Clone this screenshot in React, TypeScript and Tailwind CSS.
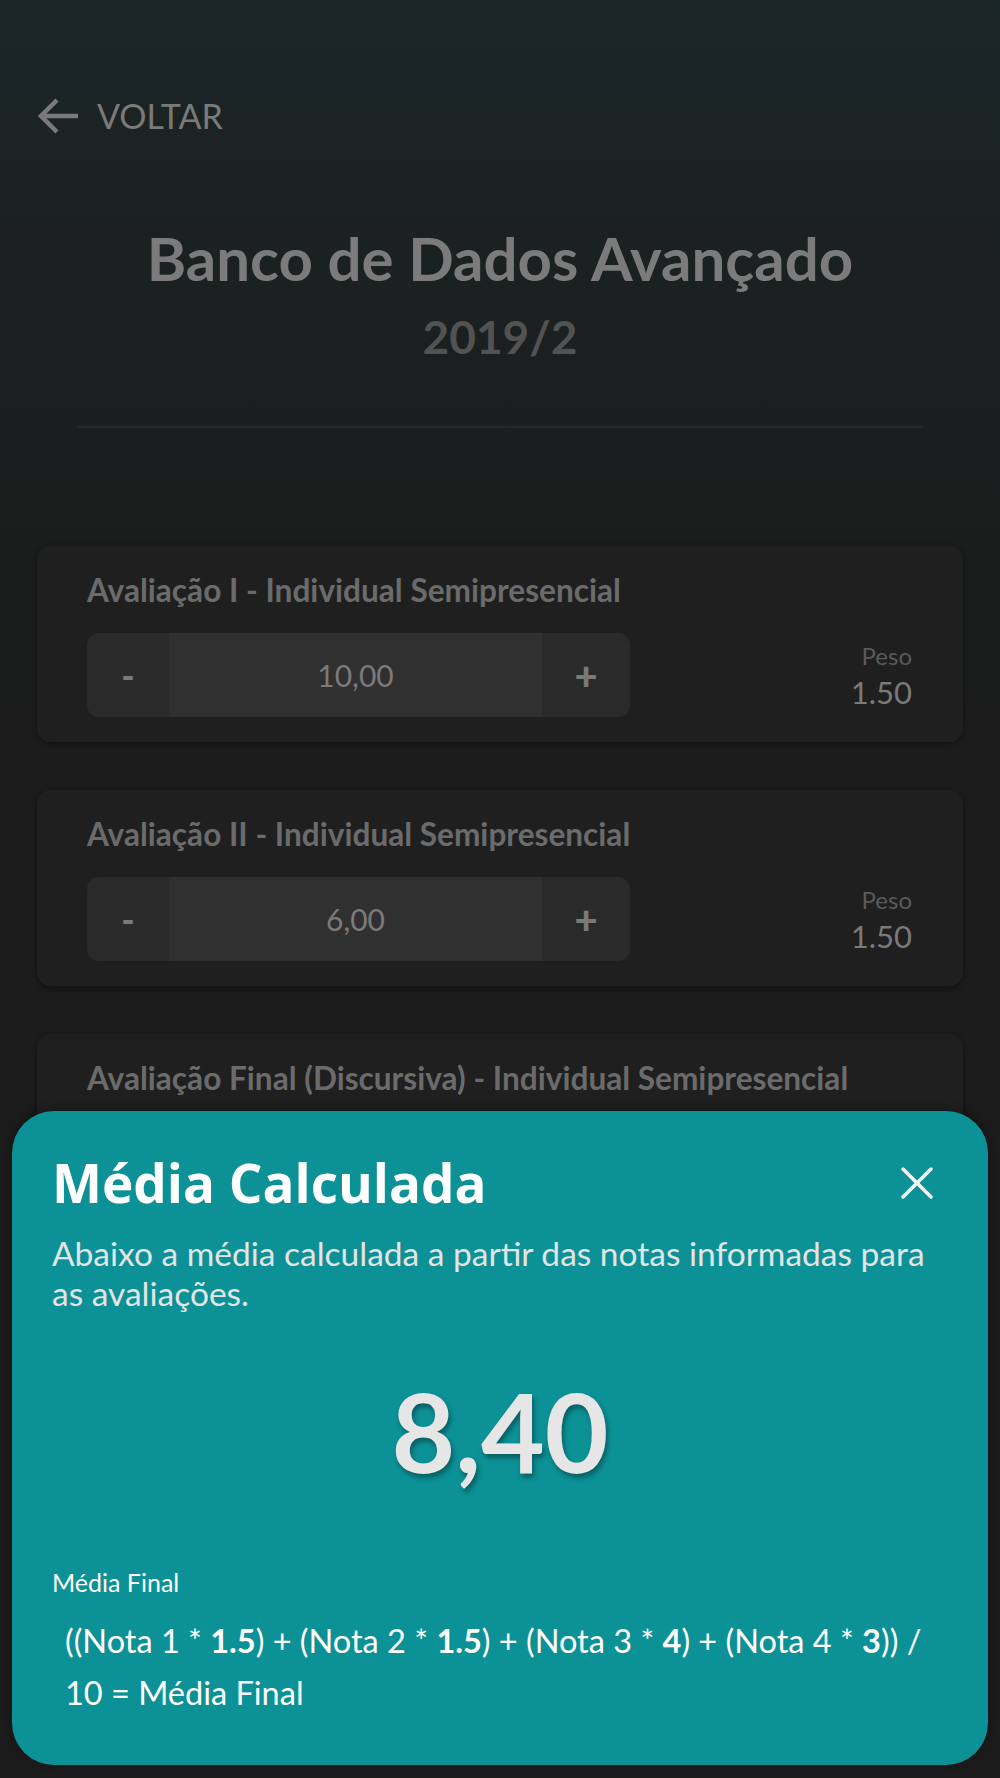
import React from "react";

function Stepper({ value }: { value: string }) {
  return (
    <div className="flex h-[84px] w-[543px] overflow-hidden rounded-[12px] bg-[#2a2a2a]">
      <div className="flex w-[82px] items-center justify-center text-[36px] font-black text-[#7a7a7a]">-</div>
      <div className="flex flex-1 items-center justify-center bg-[#303030] text-[30px] text-[#7a7a7a]">{value}</div>
      <div className="flex w-[88px] items-center justify-center text-[40px] font-black text-[#7a7a7a]">+</div>
    </div>
  );
}

function Card({ title, value }: { title: string; value?: string }) {
  return (
    <div className="rounded-[14px] bg-[#1f1f1f] pt-[25px] pb-[25px] pl-[50px] pr-[51px] shadow-[0_2px_6px_rgba(0,0,0,0.35)]">
      <div className="text-[31.6px] font-bold leading-[38px] text-[#6b6b6b]">{title}</div>
      {value && (
        <div className="mt-[24px] flex items-center justify-between">
          <Stepper value={value} />
          <div className="flex flex-col items-end">
            <div className="text-[24px] leading-[28px] text-[#5a5a5a]">Peso</div>
            <div className="mt-[5px] text-[31px] leading-[34px] text-[#7a7a7a]">1.50</div>
          </div>
        </div>
      )}
    </div>
  );
}

export default function App() {
  return (
    <div className="relative h-[1778px] w-full overflow-hidden bg-[linear-gradient(180deg,#1b2626_0%,#1b1f1f_20%,#1b1b1b_45%,#1b1b1b_100%)] font-['Lato',sans-serif]">
      <div className="flex h-[37px] items-center pl-[37px] mt-[97px]">
        <svg width="42" height="38" viewBox="0 0 42 38" fill="none" stroke="#7a7a7a" strokeWidth="4.5" strokeLinecap="butt" strokeLinejoin="miter">
          <path d="M41 19H5" />
          <path d="M20 3L4 19l16 16" />
        </svg>
        <span className="ml-[18px] text-[34px] leading-[37px] text-[#7a7a7a]">VOLTAR</span>
      </div>

      <div className="mt-[89px] text-center text-[60px] font-bold leading-[70px] text-[#7b7b7b]">Banco de Dados Avançado</div>
      <div className="mt-[16px] text-center text-[46px] font-bold leading-[56px] text-[#525252]">2019/2</div>
      <div className="mx-[77px] mt-[61px] h-[2px] bg-[#262828]" />

      <div className="mx-[37px] mt-[118px] flex flex-col gap-[48px]">
        <Card title="Avaliação I - Individual Semipresencial" value="10,00" />
        <Card title="Avaliação II - Individual Semipresencial" value="6,00" />
        <Card title="Avaliação Final (Discursiva) - Individual Semipresencial" value="8,00" />
      </div>

      <div className="absolute bottom-[13px] left-[12px] right-[12px] h-[654px] rounded-[42px] bg-[#0c9196] pl-[40px] pr-[40px] pt-[40px] shadow-[0_-2px_10px_rgba(0,0,0,0.3)]">
        <div className="flex items-center justify-between">
          <div className="font-['Open_Sans',sans-serif] text-[53px] font-bold leading-[64px] text-white">Média Calculada</div>
          <svg width="32" height="32" viewBox="0 0 32 32" className="mr-[15px]" stroke="#f4f4f4" strokeWidth="3.5" strokeLinecap="round">
            <path d="M2 2L30 30" />
            <path d="M30 2L2 30" />
          </svg>
        </div>
        <div className="mt-[18px] text-[33.5px] leading-[40px] text-[#e4e4e4]">
          Abaixo a média calculada a partir das notas informadas para as avaliações.
        </div>
        <div className="mt-[62px] text-center text-[110px] font-bold leading-[110px] text-[#e6e6e6] [text-shadow:2px_4px_5px_rgba(0,0,0,0.35)]">8,40</div>
        <div className="mt-[82px] text-[25px] leading-[30px] text-white">Média Final</div>
        <div className="mt-[18px] pl-[13px] pr-[10px] text-[32.5px] leading-[52px] text-white">
          ((Nota 1 * <b>1.5</b>) + (Nota 2 * <b>1.5</b>) + (Nota 3 * <b>4</b>) + (Nota 4 * <b>3</b>)) / 10 = Média Final
        </div>
      </div>
    </div>
  );
}
